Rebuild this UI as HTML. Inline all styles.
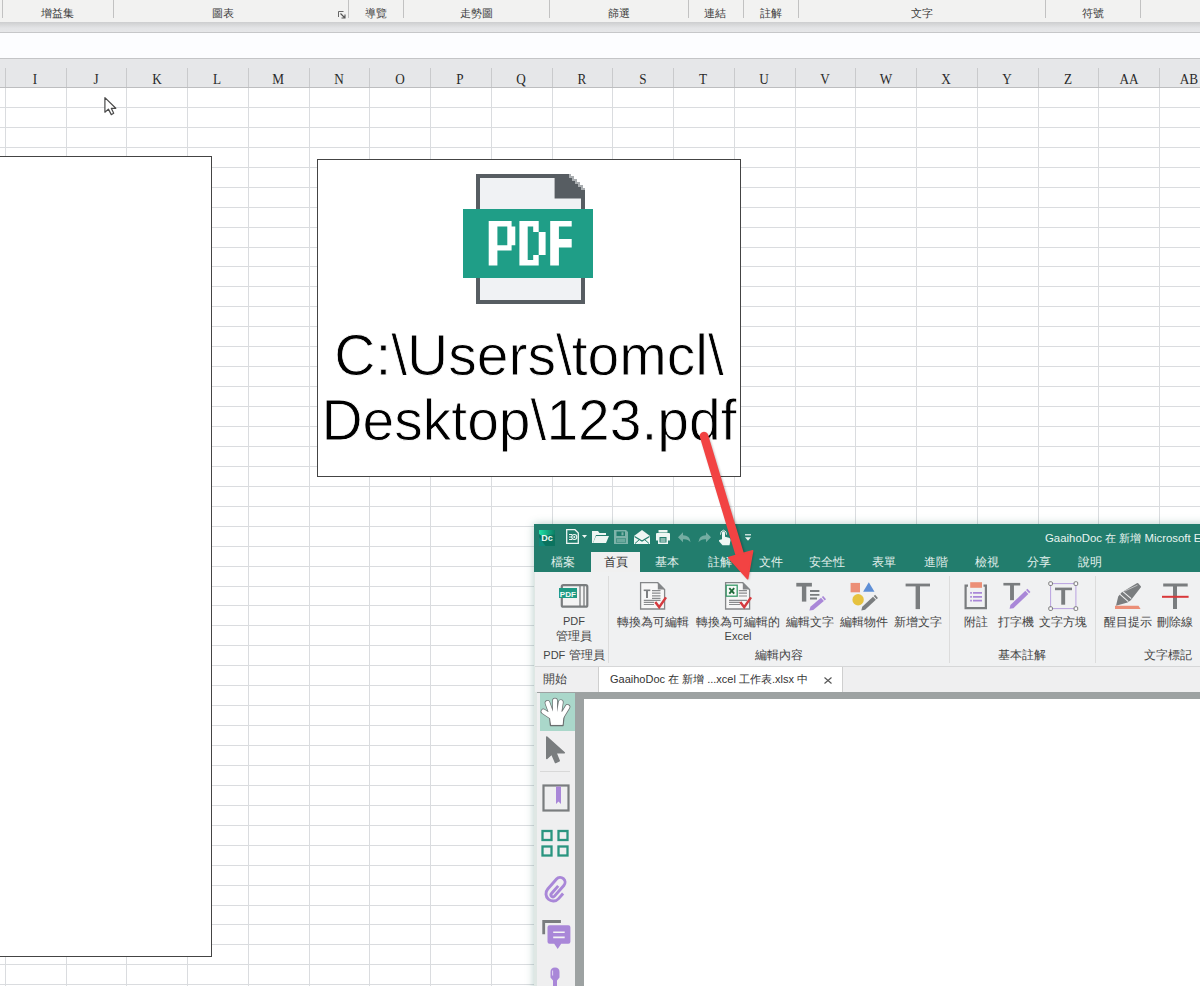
<!DOCTYPE html>
<html><head><meta charset="utf-8">
<style>
html,body{margin:0;padding:0;}
body{width:1200px;height:986px;overflow:hidden;position:relative;background:#fff;font-family:"Liberation Sans", sans-serif;}
.a{position:absolute;}
.rl{position:absolute;top:0;width:1px;height:18px;background:#c2c2c2;}
.gl{position:absolute;top:6px;font-size:11px;color:#3c3c3c;white-space:nowrap;transform:translateX(-50%);line-height:14px;}
.vl{position:absolute;width:1px;background:#dadcdf;}
.hl{position:absolute;height:1px;background:#dadcdf;left:0;width:1200px;}
.ch{position:absolute;top:71px;font-family:"Liberation Serif", serif;font-size:15px;color:#2a2a2a;transform:translateX(-50%) scaleX(0.88);line-height:16px;}
.tab{position:absolute;top:555px;font-size:12px;color:#e6f2ee;white-space:nowrap;line-height:15px;transform:translateX(-50%);}
.lbl{position:absolute;font-size:12px;color:#444;white-space:nowrap;line-height:14px;transform:translateX(-50%);text-align:center;}
</style></head><body>

<div class="a" style="left:0;top:0;width:1200px;height:22px;background:#f2f2f1;"></div>
<div class="rl" style="left:2px"></div>
<div class="rl" style="left:113px"></div>
<div class="rl" style="left:348px"></div>
<div class="rl" style="left:403px"></div>
<div class="rl" style="left:549px"></div>
<div class="rl" style="left:688px"></div>
<div class="rl" style="left:743px"></div>
<div class="rl" style="left:798px"></div>
<div class="rl" style="left:1045px"></div>
<div class="rl" style="left:1140px"></div>
<div class="gl" style="left:57px">增益集</div>
<div class="gl" style="left:223px">圖表</div>
<div class="gl" style="left:376px">導覽</div>
<div class="gl" style="left:476px">走勢圖</div>
<div class="gl" style="left:619px">篩選</div>
<div class="gl" style="left:715px">連結</div>
<div class="gl" style="left:771px">註解</div>
<div class="gl" style="left:922px">文字</div>
<div class="gl" style="left:1093px">符號</div>
<svg class="a" style="left:338px;top:11px" width="8" height="8"><path d="M0.5 6V0.5H5.5" stroke="#666" fill="none"/><path d="M2.5 2.5L6.5 6.5M7 3.5V7H3.5" stroke="#555" fill="none" stroke-width="1.1"/></svg>
<div class="a" style="left:0;top:22px;width:1200px;height:10px;background:linear-gradient(#cdcecf,#e3e4e6 60%,#e6e7e9);"></div>
<div class="a" style="left:0;top:32px;width:1200px;height:1px;background:#c6c7c9;"></div>
<div class="a" style="left:0;top:33px;width:1200px;height:25px;background:#fcfdff;"></div>
<div class="a" style="left:0;top:58px;width:1200px;height:1px;background:#c4c5c7;"></div>
<div class="a" style="left:0;top:59px;width:1200px;height:28px;background:#e6e7e9;"></div>
<div class="a" style="left:0;top:87px;width:1200px;height:1px;background:#bdbec0;"></div>
<div class="vl" style="left:5px;top:68px;height:19px;background:#c9cacc"></div>
<div class="vl" style="left:5px;top:88px;height:898px;"></div>
<div class="vl" style="left:66px;top:68px;height:19px;background:#c9cacc"></div>
<div class="vl" style="left:66px;top:88px;height:898px;"></div>
<div class="vl" style="left:126px;top:68px;height:19px;background:#c9cacc"></div>
<div class="vl" style="left:126px;top:88px;height:898px;"></div>
<div class="vl" style="left:187px;top:68px;height:19px;background:#c9cacc"></div>
<div class="vl" style="left:187px;top:88px;height:898px;"></div>
<div class="vl" style="left:248px;top:68px;height:19px;background:#c9cacc"></div>
<div class="vl" style="left:248px;top:88px;height:898px;"></div>
<div class="vl" style="left:309px;top:68px;height:19px;background:#c9cacc"></div>
<div class="vl" style="left:309px;top:88px;height:898px;"></div>
<div class="vl" style="left:369px;top:68px;height:19px;background:#c9cacc"></div>
<div class="vl" style="left:369px;top:88px;height:898px;"></div>
<div class="vl" style="left:430px;top:68px;height:19px;background:#c9cacc"></div>
<div class="vl" style="left:430px;top:88px;height:898px;"></div>
<div class="vl" style="left:491px;top:68px;height:19px;background:#c9cacc"></div>
<div class="vl" style="left:491px;top:88px;height:898px;"></div>
<div class="vl" style="left:552px;top:68px;height:19px;background:#c9cacc"></div>
<div class="vl" style="left:552px;top:88px;height:898px;"></div>
<div class="vl" style="left:612px;top:68px;height:19px;background:#c9cacc"></div>
<div class="vl" style="left:612px;top:88px;height:898px;"></div>
<div class="vl" style="left:673px;top:68px;height:19px;background:#c9cacc"></div>
<div class="vl" style="left:673px;top:88px;height:898px;"></div>
<div class="vl" style="left:734px;top:68px;height:19px;background:#c9cacc"></div>
<div class="vl" style="left:734px;top:88px;height:898px;"></div>
<div class="vl" style="left:795px;top:68px;height:19px;background:#c9cacc"></div>
<div class="vl" style="left:795px;top:88px;height:898px;"></div>
<div class="vl" style="left:855px;top:68px;height:19px;background:#c9cacc"></div>
<div class="vl" style="left:855px;top:88px;height:898px;"></div>
<div class="vl" style="left:916px;top:68px;height:19px;background:#c9cacc"></div>
<div class="vl" style="left:916px;top:88px;height:898px;"></div>
<div class="vl" style="left:977px;top:68px;height:19px;background:#c9cacc"></div>
<div class="vl" style="left:977px;top:88px;height:898px;"></div>
<div class="vl" style="left:1038px;top:68px;height:19px;background:#c9cacc"></div>
<div class="vl" style="left:1038px;top:88px;height:898px;"></div>
<div class="vl" style="left:1098px;top:68px;height:19px;background:#c9cacc"></div>
<div class="vl" style="left:1098px;top:88px;height:898px;"></div>
<div class="vl" style="left:1159px;top:68px;height:19px;background:#c9cacc"></div>
<div class="vl" style="left:1159px;top:88px;height:898px;"></div>
<div class="vl" style="left:1220px;top:68px;height:19px;background:#c9cacc"></div>
<div class="vl" style="left:1220px;top:88px;height:898px;"></div>
<div class="ch" style="left:35.2px">I</div>
<div class="ch" style="left:95.9px">J</div>
<div class="ch" style="left:156.7px">K</div>
<div class="ch" style="left:217.4px">L</div>
<div class="ch" style="left:278.2px">M</div>
<div class="ch" style="left:338.9px">N</div>
<div class="ch" style="left:399.6px">O</div>
<div class="ch" style="left:460.4px">P</div>
<div class="ch" style="left:521.1px">Q</div>
<div class="ch" style="left:581.9px">R</div>
<div class="ch" style="left:642.6px">S</div>
<div class="ch" style="left:703.3px">T</div>
<div class="ch" style="left:764.1px">U</div>
<div class="ch" style="left:824.8px">V</div>
<div class="ch" style="left:885.6px">W</div>
<div class="ch" style="left:946.3px">X</div>
<div class="ch" style="left:1007.0px">Y</div>
<div class="ch" style="left:1067.8px">Z</div>
<div class="ch" style="left:1128.5px">AA</div>
<div class="ch" style="left:1189.3px">AB</div>
<div class="hl" style="top:107px"></div>
<div class="hl" style="top:127px"></div>
<div class="hl" style="top:147px"></div>
<div class="hl" style="top:167px"></div>
<div class="hl" style="top:187px"></div>
<div class="hl" style="top:207px"></div>
<div class="hl" style="top:227px"></div>
<div class="hl" style="top:247px"></div>
<div class="hl" style="top:266px"></div>
<div class="hl" style="top:286px"></div>
<div class="hl" style="top:306px"></div>
<div class="hl" style="top:326px"></div>
<div class="hl" style="top:346px"></div>
<div class="hl" style="top:366px"></div>
<div class="hl" style="top:386px"></div>
<div class="hl" style="top:406px"></div>
<div class="hl" style="top:426px"></div>
<div class="hl" style="top:446px"></div>
<div class="hl" style="top:466px"></div>
<div class="hl" style="top:486px"></div>
<div class="hl" style="top:506px"></div>
<div class="hl" style="top:526px"></div>
<div class="hl" style="top:546px"></div>
<div class="hl" style="top:566px"></div>
<div class="hl" style="top:586px"></div>
<div class="hl" style="top:605px"></div>
<div class="hl" style="top:625px"></div>
<div class="hl" style="top:645px"></div>
<div class="hl" style="top:665px"></div>
<div class="hl" style="top:685px"></div>
<div class="hl" style="top:705px"></div>
<div class="hl" style="top:725px"></div>
<div class="hl" style="top:745px"></div>
<div class="hl" style="top:765px"></div>
<div class="hl" style="top:785px"></div>
<div class="hl" style="top:805px"></div>
<div class="hl" style="top:825px"></div>
<div class="hl" style="top:845px"></div>
<div class="hl" style="top:865px"></div>
<div class="hl" style="top:885px"></div>
<div class="hl" style="top:905px"></div>
<div class="hl" style="top:924px"></div>
<div class="hl" style="top:944px"></div>
<div class="hl" style="top:964px"></div>
<div class="hl" style="top:984px"></div>
<div class="a" style="left:-3px;top:156px;width:213px;height:799px;background:#fff;border:1.5px solid #444;"></div>
<div class="a" style="left:317px;top:159px;width:422px;height:316px;background:#fff;border:1.5px solid #444;"></div>
<svg class="a" style="left:460px;top:170px" width="140" height="140" viewBox="460 170 140 140">
<path d="M476 174H555V198H585V304H476Z" fill="#f0f2f4"/>
<path d="M478 176H555M478 174V304M476 302H585M583 198V304" fill="none" stroke="#575d62" stroke-width="4"/>
<path d="M554.6 174H569V177H572V180H575V183H578V186H581V189H585V198.5H554.6Z" fill="#575d62"/>
<path d="M569 174H571V176H574V179H577V182H580V185H583V188H585V190H581V187H578V184H575V181H572V178H569Z" fill="#a9adb0"/>
<rect x="463" y="209" width="130" height="69" fill="#1f9e87"/>
<g fill="#fff" fill-rule="evenodd">
<path d="M488.7 221H511.6V226.5H515.3V245.3H511.6V250.4H497.4V265.5H488.7ZM497.4 226.5V245.3H507.3V226.5Z"/>
<path d="M519.4 221H538.7V232H545.6V255H538.7V265.5H519.4ZM527.7 226.5H533.2V232H538.7V255H533.2V260H527.7Z"/>
<path d="M550.2 221H571.7V226.5H558.9V238.9H571.7V247.6H558.9V265.5H550.2Z"/>
</g>
</svg>
<svg class="a" style="left:100px;top:94px" width="20" height="24" viewBox="100 94 20 24"><path d="M104.9 97.6V112.2L108.4 109.1L111.3 114.6L113.7 113.3L111.3 108.3H115.8Z" fill="#fff" stroke="#4a4a4a" stroke-width="1.2" stroke-linejoin="round"/></svg>
<div class="a" style="left:317px;top:323px;width:424px;text-align:center;font-size:57px;line-height:65px;color:#000;white-space:nowrap;-webkit-text-stroke:0.8px #fff;">C:\Users\tomcl\<br>Desktop\123.pdf</div>
<div class="a" style="left:534px;top:524px;width:700px;height:480px;box-shadow:0 0 8px rgba(40,110,95,0.35);background:#227d6d;"></div>
<div class="a" style="left:534px;top:524px;width:666px;height:48px;background:#227d6d;"></div>
<svg class="a" style="left:539px;top:530px" width="16" height="16" viewBox="0 0 16 16">
<defs><linearGradient id="dcg" x1="0" y1="0" x2="1" y2="0"><stop offset="0" stop-color="#1ee3a6"/><stop offset="1" stop-color="#0c7d64"/></linearGradient></defs>
<rect x="0" y="0" width="16" height="16" fill="#0b735f"/>
<path d="M0 0H16V4.5Q8 5 4 6.5L0 4Z" fill="url(#dcg)"/>
<path d="M0 7L6.5 16H0Z" fill="#0f8979"/>
<text x="2.3" y="11.2" font-family="Liberation Sans, sans-serif" font-weight="bold" font-size="9" fill="#e8fbf5">Dc</text></svg>
<svg class="a" style="left:560px;top:526px" width="200" height="22" viewBox="560 526 200 22">
<g fill="none" stroke="#eef6f3" stroke-width="1.3">
<path d="M566.7 529.7H575L578.3 533V543.3H566.7Z"/>
</g>
<g fill="#eef6f3">
<rect x="569" y="534" width="3" height="1"/><rect x="569" y="536.5" width="3" height="1"/><rect x="569" y="539" width="3" height="1"/>
<circle cx="574.3" cy="537" r="1"/>
<path d="M582 535H587L584.5 538Z"/>
<circle cx="574.3" cy="537" r="2.5" fill="none" stroke="#eef6f3" stroke-width="1.1"/>
<path d="M592 531H598L599.5 533H606V535H596L593 543H592Z"/>
<path d="M596 536H609L606 543H593Z"/>
</g>
<g fill="#eef6f3" opacity="0.45">
<path d="M614 530H626L628 532V544H614ZM616.5 531.5V536H625V531.5ZM616 538.5V542.5H626V538.5Z" fill-rule="evenodd"/>
<rect x="621.5" y="532.3" width="2" height="3"/>
<rect x="616.5" y="539" width="9" height="3" opacity="0.8"/>
</g>
<g fill="#eef6f3">
<path d="M634 536L642 530L650 536V544H634Z"/>
</g>
<path d="M634.5 536.5L642 541L649.5 536.5" stroke="#227d6d" stroke-width="1.2" fill="none"/>
<path d="M635 543.5L640 539M649 543.5L644 539" stroke="#227d6d" stroke-width="1" fill="none"/>
<g fill="#eef6f3">
<path d="M658.5 530H667.5V532.5H658.5Z"/>
<path d="M657 533H669Q670 533 670 534V540.5H668V544H658V540.5H656V534Q656 533 657 533ZM659.5 537V542.5H666.5V537Z" fill-rule="evenodd"/>
<rect x="660.5" y="538.5" width="5" height="1"/><rect x="660.5" y="540.5" width="5" height="1"/>
</g>
<g transform="translate(0,1.2)"><g fill="#eef6f3" opacity="0.4">
<path d="M678 536L683 531V534Q690 534 690.5 541Q688 537.5 683 538V541Z"/>
<path d="M711 536L706 531V534Q699 534 698.5 541Q701 537.5 706 538V541Z"/>
</g>
<g fill="#eef6f3">
<path d="M722 538V531.5Q722 530 723.5 530Q725 530 725 531.5V535.5L729 536.5Q731 537 730.5 539L729.5 544H722.5L719 540Q718.5 538.5 720 538.5Z"/>
</g>
<path d="M720.5 533.5Q720 530 723.5 529Q727 530 726.5 533.5" stroke="#eef6f3" stroke-width="0.9" fill="none"/>
<g fill="#eef6f3"><rect x="745" y="533" width="6" height="1.2"/><path d="M745 536H751L748 539.5Z"/></g>
</g>
</svg>
<div class="a" style="left:1045px;top:530px;font-size:11.4px;line-height:16px;color:#e8f4f0;white-space:nowrap;">GaaihoDoc 在 新增 Microsoft Excel 工作表.xlsx 中</div>
<div class="a" style="left:591px;top:552px;width:49px;height:20px;background:#f0f0f0;"></div>
<div class="tab" style="left:563px;color:#e3f0ec">檔案</div>
<div class="tab" style="left:616px;color:#333">首頁</div>
<div class="tab" style="left:667px;color:#e3f0ec">基本</div>
<div class="tab" style="left:720px;color:#e3f0ec">註解</div>
<div class="tab" style="left:771px;color:#e3f0ec">文件</div>
<div class="tab" style="left:827px;color:#e3f0ec">安全性</div>
<div class="tab" style="left:884px;color:#e3f0ec">表單</div>
<div class="tab" style="left:936px;color:#e3f0ec">進階</div>
<div class="tab" style="left:987px;color:#e3f0ec">檢視</div>
<div class="tab" style="left:1039px;color:#e3f0ec">分享</div>
<div class="tab" style="left:1090px;color:#e3f0ec">說明</div>
<div class="a" style="left:534px;top:572px;width:666px;height:414px;background:#dfe7e4;"></div>
<div class="a" style="left:535px;top:572px;width:665px;height:94px;background:#f0f1f2;"></div>
<div class="a" style="left:535px;top:666px;width:665px;height:1px;background:#d6d7d8;"></div>
<div class="a" style="left:608px;top:576px;width:1px;height:87px;background:#dcdcdc;"></div>
<div class="a" style="left:949px;top:576px;width:1px;height:87px;background:#dcdcdc;"></div>
<div class="a" style="left:1095px;top:576px;width:1px;height:87px;background:#dcdcdc;"></div>
<svg class="a" style="left:550px;top:576px" width="650" height="40" viewBox="550 576 650 40">
<!-- PDF manager -->
<rect x="561.8" y="585.2" width="25.5" height="21.5" rx="1.5" fill="#f3f3f3" stroke="#7a7d7f" stroke-width="2.2"/>
<path d="M580 585V607M584 585V607" stroke="#7a7d7f" stroke-width="1.3"/>
<rect x="559" y="588" width="18" height="10" fill="#1f9a84"/>
<text x="559.8" y="596.5" font-family="Liberation Sans, sans-serif" font-weight="bold" font-size="8" fill="#f2faf7">PDF</text>
<!-- convert editable -->
<path d="M640.6 582.7H657.8L664.6 589.5V609H640.6Z" fill="#f7f7f7" stroke="#858789" stroke-width="1.3"/>
<path d="M657.8 582.7V589.5H664.6Z" fill="#858789"/>
<path d="M643.7 590.3H650.3" stroke="#7d7f81" stroke-width="1.6"/>
<path d="M647 590V598" stroke="#7d7f81" stroke-width="2"/>
<path d="M652 590.6H660.5M652 593.2H660.5M652 595.8H660.5M652 598.4H660.5M643.8 600.3H660.5M643.8 602.4H654M643.8 604.5H654" stroke="#8a8c8e" stroke-width="1.2"/>
<path d="M655.3 602L659.2 607.2L666 597.4" stroke="#d43a3f" stroke-width="2.5" fill="none"/>
<!-- convert excel -->
<path d="M725.6 582.7H742.8L749.6 589.5V609H725.6Z" fill="#f7f7f7" stroke="#858789" stroke-width="1.3"/>
<path d="M742.8 582.7V589.5H749.6Z" fill="#858789"/>
<rect x="726.2" y="585.2" width="11" height="11" fill="#f7f9f7" stroke="#3a9a6a" stroke-width="1.3"/>
<path d="M729.3 588.2L734.2 593.6M734.2 588.2L729.3 593.6" stroke="#1e6b3a" stroke-width="1.9"/>
<path d="M738.8 590.6H747M738.8 593.2H747M738.8 596H747M729 600.3H747M729 602.4H740M729 604.5H740" stroke="#8a8c8e" stroke-width="1.2"/>
<path d="M740.3 602L744.2 607.2L751 597.4" stroke="#d43a3f" stroke-width="2.5" fill="none"/>
<!-- edit text -->
<path d="M796.3 584.7H811.9" stroke="#7a7d7f" stroke-width="3.7"/>
<path d="M804.1 584V601.6" stroke="#7a7d7f" stroke-width="4.4"/>
<path d="M810 591H819.4M810 594.8H819.4M810 598.5H817" stroke="#7a7d7f" stroke-width="1.8"/>
<polygon points="809.40,610.40 813.26,610.02 823.88,601.09 821.04,597.72 810.43,606.66" fill="#a987d8"/><polygon points="824.64,600.44 826.02,599.28 823.18,595.92 821.81,597.08" fill="#a987d8"/>
<!-- edit object -->
<rect x="850.6" y="582.9" width="9.4" height="9.4" fill="#ec8f77"/>
<path d="M863.1 591.8L868.8 582.3L874.5 591.8Z" fill="#5e8fd6"/>
<circle cx="858.1" cy="599.8" r="5.7" fill="#e6c23f"/>
<polygon points="861.30,610.40 865.08,609.78 875.86,599.84 873.02,596.75 862.23,606.69" fill="#7a7d7f"/><polygon points="876.60,599.16 877.92,597.94 875.08,594.86 873.75,596.07" fill="#7a7d7f"/>
<!-- new text -->
<path d="M905.6 585H930" stroke="#7a7d7f" stroke-width="2.8"/>
<path d="M917.8 585V609.1" stroke="#7a7d7f" stroke-width="4.4"/>
<!-- note -->
<path d="M968 585.6H965.6V608.2H985.9V585.6H983.5" fill="none" stroke="#7a7d7f" stroke-width="2.2"/>
<rect x="970.2" y="582.2" width="11.8" height="5.6" fill="#ec8f77"/>
<path d="M970.2 592.9H971.9M973 592.9H982M970.2 596.8H971.9M973 596.8H982M970.2 600.7H971.9M973 600.7H982" stroke="#a987d8" stroke-width="1.7"/>
<!-- typewriter -->
<path d="M1003.4 584.2H1020.2" stroke="#7a7d7f" stroke-width="2.6"/>
<path d="M1012 584V600.2" stroke="#7a7d7f" stroke-width="3.9"/>
<polygon points="1009.60,608.80 1013.43,608.18 1028.39,593.92 1025.36,590.74 1010.40,605.00" fill="#a987d8"/><polygon points="1029.12,593.23 1030.42,591.99 1027.38,588.81 1026.08,590.05" fill="#a987d8"/>
<!-- text box -->
<rect x="1050.6" y="583.6" width="25.3" height="25" fill="none" stroke="#b9a2e0" stroke-width="1"/>
<g fill="#fff" stroke="#6a6a6a" stroke-width="0.9"><rect x="1048.8" y="581.8" width="3.6" height="3.6" rx="1"/><rect x="1074.1" y="581.8" width="3.6" height="3.6" rx="1"/><rect x="1048.8" y="606.8" width="3.6" height="3.6" rx="1"/><rect x="1074.1" y="606.8" width="3.6" height="3.6" rx="1"/></g>
<path d="M1055 588.9H1072" stroke="#7a7d7f" stroke-width="2.6"/>
<path d="M1063.2 588.5V604.7" stroke="#7a7d7f" stroke-width="3.9"/>
<!-- highlight -->
<path d="M1136.8 583.2Q1137.5 582.6 1138.2 583.2L1140.8 586.2Q1141.3 586.9 1140.7 587.6L1130.8 600.3L1127.5 602.4L1116 605.8L1118.2 596.5L1121.5 592.4Z" fill="#7a7d7f"/>
<path d="M1119.8 594.2L1128.3 601.6M1122.6 591.4L1131.2 598.7" stroke="#f0f0f1" stroke-width="1.1"/>
<path d="M1124.5 591.2L1137.5 585.2" stroke="#f0f0f1" stroke-width="0.8" opacity="0.7"/>
<path d="M1115 605.8H1138.5L1140.6 609H1115Z" fill="#eb8f78"/>
<!-- strike -->
<path d="M1163.2 585H1187.7" stroke="#7a7d7f" stroke-width="3"/>
<path d="M1175 586V609" stroke="#7a7d7f" stroke-width="4"/>
<path d="M1162 596.8H1188.6" stroke="#d9383a" stroke-width="2"/>
</svg>
<div class="lbl" style="left:653px;top:615px">轉換為可編輯</div>
<div class="lbl" style="left:738px;top:615px">轉換為可編輯的</div>
<div class="lbl" style="left:738px;top:629px"><span style="font-size:11px">Excel</span></div>
<div class="lbl" style="left:810px;top:615px">編輯文字</div>
<div class="lbl" style="left:864px;top:615px">編輯物件</div>
<div class="lbl" style="left:918px;top:615px">新增文字</div>
<div class="lbl" style="left:976px;top:615px">附註</div>
<div class="lbl" style="left:1016px;top:615px">打字機</div>
<div class="lbl" style="left:1063px;top:615px">文字方塊</div>
<div class="lbl" style="left:1128px;top:615px">醒目提示</div>
<div class="lbl" style="left:1175px;top:615px">刪除線</div>
<div class="lbl" style="left:574px;top:614px"><span style="font-size:11px">PDF</span></div>
<div class="lbl" style="left:574px;top:629px">管理員</div>
<div class="lbl" style="left:574px;top:648px"><span style="font-size:11px">PDF</span> 管理員</div>
<div class="lbl" style="left:779px;top:648px">編輯內容</div>
<div class="lbl" style="left:1022px;top:648px">基本註解</div>
<div class="lbl" style="left:1168px;top:648px">文字標記</div>
<div class="a" style="left:535px;top:667px;width:665px;height:25px;background:#efeff0;"></div>
<div class="lbl" style="left:555px;top:672px;transform:translateX(-50%)">開始</div>
<div class="a" style="left:598px;top:667px;width:243px;height:25px;background:#fff;border-left:1px solid #cfcfcf;border-right:1px solid #cfcfcf;"></div>
<div class="a" style="left:610px;top:672px;font-size:11px;line-height:14px;color:#333;white-space:nowrap;">GaaihoDoc 在 新增 ...xcel 工作表.xlsx 中</div>
<svg class="a" style="left:824px;top:677px" width="8" height="7"><path d="M0.5 0.5L7.5 6.5M7.5 0.5L0.5 6.5" stroke="#555" stroke-width="1.1"/></svg>
<div class="a" style="left:537px;top:692px;width:663px;height:294px;background:#9da2a2;"></div>
<div class="a" style="left:537px;top:693px;width:38px;height:293px;background:#efeff0;"></div>
<div class="a" style="left:540px;top:693px;width:35px;height:38px;background:#aad7ca;"></div>
<div class="a" style="left:584px;top:699px;width:616px;height:287px;background:#fff;"></div>
<div class="a" style="left:540px;top:771px;width:30px;height:1px;background:#d8d8d8;"></div>
<svg class="a" style="left:535px;top:693px" width="40" height="293" viewBox="535 693 40 293">
<!-- hand -->
<g stroke="#6b6f70" stroke-width="5.6" stroke-linecap="round" fill="none">
<path d="M551 716.5L543.5 711.5M551.5 714L547.5 703M555 714V700.5M559 714L560.8 702.2M562 716L567.5 707"/>
</g>
<path d="M549 711H564.5L563 725.5H550.5Z" fill="#fff" stroke="#6b6f70" stroke-width="1.4" stroke-linejoin="round"/>
<g stroke="#fff" stroke-width="4.2" stroke-linecap="round" fill="none">
<path d="M551 716.5L543.5 711.5M551.5 714L547.5 703M555 714V700.5M559 714L560.8 702.2M562 716L567.5 707"/>
</g>
<path d="M549.5 712H564L562.5 724.8H551Z" fill="#fff"/>
<!-- arrow -->
<path d="M546.8 737V758.5L551.8 754L555.5 762.5L559.2 760.8L555.8 752.5L564.3 752.8Z" fill="#7a7d7f" stroke="#7a7d7f" stroke-width="1.6" stroke-linejoin="round"/>
<!-- bookmark -->
<rect x="543.5" y="785.5" width="25" height="25" fill="none" stroke="#7a7d7f" stroke-width="2.2"/>
<path d="M556 786.5H561V804L558.5 801.5L556 804Z" fill="#a987d8"/>
<!-- thumbnails -->
<g fill="none" stroke="#2a9580" stroke-width="2.3"><rect x="542.5" y="831" width="9" height="9"/><rect x="558.5" y="831" width="9" height="9"/><rect x="542.5" y="846.5" width="9" height="9"/><rect x="558.5" y="846.5" width="9" height="9"/></g>
<!-- paperclip -->
<g transform="matrix(0.66,-0.753,0.753,0.66,537.4,871.6)"><path d="M0.5 33.7L-6.3 33.7A7.2 7.2 0 0 1 -6.3 19.3L7 19.3A4.85 4.85 0 0 1 7 29L-7.2 29A2 2 0 0 1 -7.2 25L3 25" fill="none" stroke="#a987d8" stroke-width="2.9"/></g>
<!-- comments -->
<path d="M543.7 934.2V921.5H560.9" fill="none" stroke="#7a7d7f" stroke-width="2.8"/>
<path d="M549.5 925.2H568.4Q570.4 925.2 570.4 927.2V941.8Q570.4 943.8 568.4 943.8H561.2L557.7 949L554.2 943.8H549.5Q547.5 943.8 547.5 941.8V927.2Q547.5 925.2 549.5 925.2Z" fill="#a987d8"/>
<path d="M553.2 932.2H564.7M553.2 937.4H564.7" stroke="#f3f3f3" stroke-width="1.6"/>
<!-- pin -->
<path d="M550.5 972Q550.5 967.5 555 967.5Q559.5 967.5 559.5 972V977.5L557 980.5V986H553V980.5L550.5 977.5Z" fill="#a987d8"/>
<path d="M552.6 970.5V975.5" stroke="#e9def7" stroke-width="0.9"/>
</svg>
<svg class="a" style="left:680px;top:420px" width="100" height="180" viewBox="680 420 100 180">
<defs><filter id="sh" x="-50%" y="-50%" width="200%" height="200%"><feGaussianBlur stdDeviation="1.2"/></filter></defs>
<g opacity="0.25" filter="url(#sh)" transform="translate(1,1.5)"><path d="M704 436L740 553" stroke="#000" stroke-width="8.5" stroke-linecap="round"/><path d="M728.8 557.6L752.6 550.8L747.6 578.8Z" fill="#000"/></g>
<path d="M704 436L740.2 556" stroke="#f24343" stroke-width="8.6" stroke-linecap="round"/>
<path d="M728.8 557.6L752.6 550.8L747.6 578.8Z" fill="#f24343" stroke="#f24343" stroke-width="1.6" stroke-linejoin="round"/>
</svg>
</body></html>
